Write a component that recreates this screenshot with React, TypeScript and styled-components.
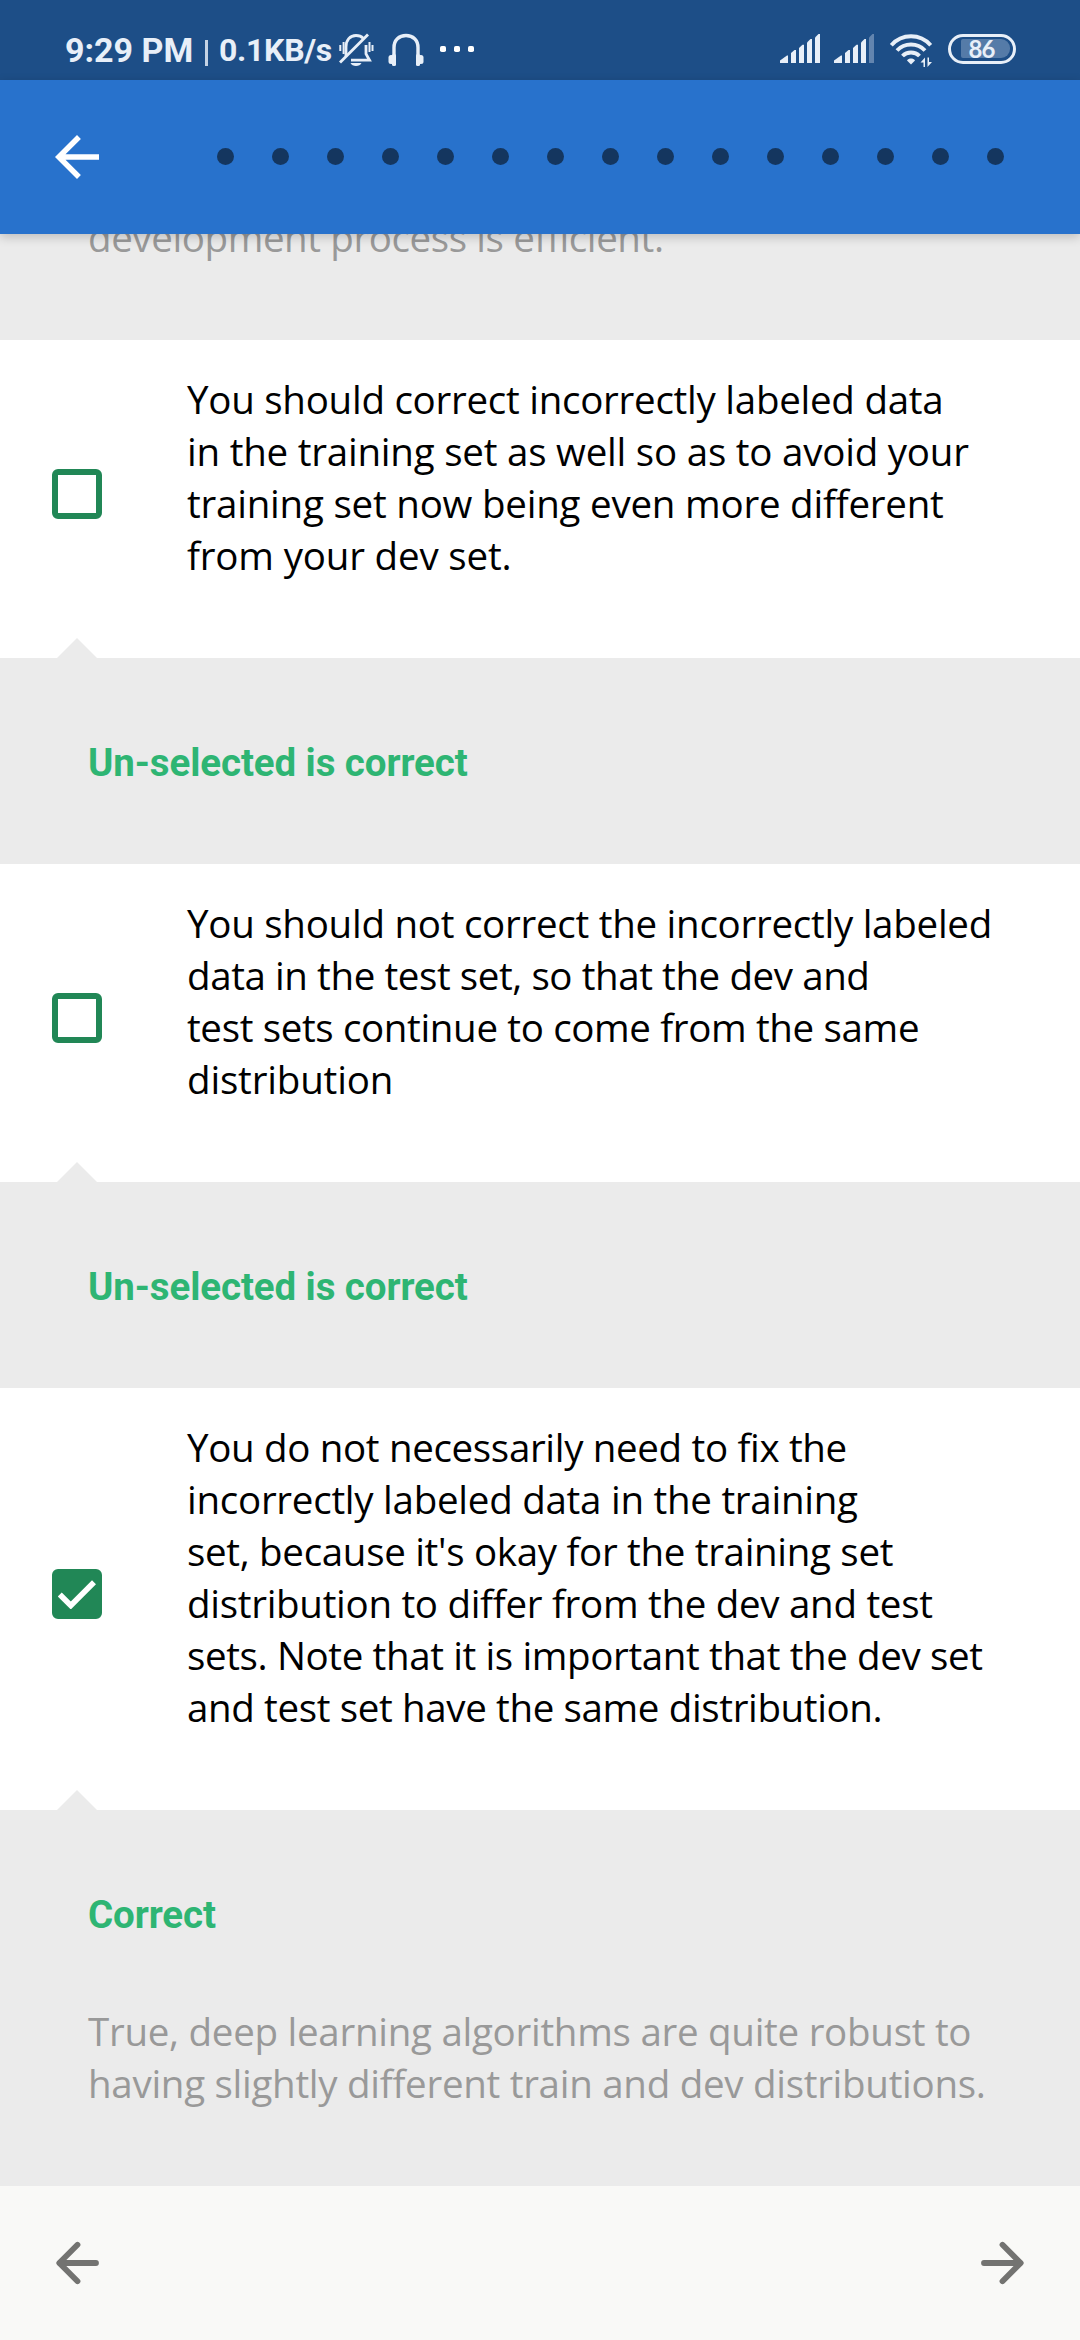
import React from "react";
import styled, { createGlobalStyle } from "styled-components";

const GlobalStyle = createGlobalStyle`
  body { margin: 0; background: #fff; }
  * { box-sizing: border-box; }
`;

const Screen = styled.div`
  width: 1080px;
  height: 2340px;
  display: flex;
  flex-direction: column;
  overflow: hidden;
  background: #fff;
  font-family: "Open Sans", sans-serif;
`;

const StatusBar = styled.header`
  height: 80px;
  flex: none;
  display: flex;
  align-items: flex-start;
  justify-content: space-between;
  padding: 30px 64px 0 65px;
  background: #1d4e87;
  color: #e8eff8;
  font-family: Roboto, sans-serif;
  font-weight: 700;
`;

const StatusGroup = styled.div`
  display: flex;
  height: 40px;
  align-items: flex-start;
`;

const Clock = styled.span`
  width: 134px;
  font-size: 34px;
  line-height: 40px;
  white-space: nowrap;
`;

const Divider = styled.span`
  width: 3px;
  height: 26px;
  margin: 10px 11px 0 6px;
  background: #c5d3e5;
`;

const NetSpeed = styled.span`
  width: 120px;
  font-size: 32px;
  line-height: 41px;
  letter-spacing: -0.3px;
  white-space: nowrap;
`;

const StatusIcon = styled.svg<{ $gap?: number; $top?: number }>`
  display: block;
  flex: none;
  margin-left: ${(p) => p.$gap ?? 0}px;
  margin-top: ${(p) => p.$top ?? 0}px;
`;

const Battery = styled.div`
  width: 68px;
  height: 30px;
  margin: 4px 0 0 15px;
  padding: 2px 3px 2px 9.5px;
  border: 3.5px solid #e8eff8;
  border-radius: 15px;
`;

const BatteryLevel = styled.div`
  display: flex;
  align-items: center;
  justify-content: center;
  width: 49px;
  height: 19px;
  padding-right: 7px;
  border-radius: 2px 9px 9px 2px;
  background: #557ba8;
  font: 700 24px/19px Lato, sans-serif;
  letter-spacing: -1px;
`;

const AppBar = styled.nav`
  z-index: 1;
  height: 154px;
  flex: none;
  display: flex;
  align-items: center;
  justify-content: space-between;
  padding: 0 76px 0 44px;
  background: #2872cc;
  box-shadow: 0 3px 10px rgba(0, 0, 0, 0.2);
`;

const Steps = styled.div`
  display: flex;
  gap: 38px;
  padding-bottom: 1px;
`;

const Step = styled.span`
  width: 17px;
  height: 17px;
  border-radius: 50%;
  background: #14365f;
`;

const Content = styled.main`
  flex: 1;
  display: flex;
  flex-direction: column;
  min-height: 0;
`;

const Option = styled.section`
  flex: none;
  display: flex;
  align-items: center;
  padding: 33px 0 77px 52px;
  background: #fff;
`;

const CheckFrame = styled.span<{ $checked: boolean }>`
  display: flex;
  align-items: center;
  justify-content: center;
  width: 50px;
  height: 50px;
  margin: 34px 85px 0 0;
  border: 6px solid #218756;
  border-radius: 6px;
  background: ${(p) => (p.$checked ? "#218756" : "transparent")};
`;

const BodyText = styled.p<{ $muted?: boolean }>`
  margin: 0;
  font-size: 38.5px;
  line-height: 52px;
  color: ${(p) => (p.$muted ? "#999" : "#000")};
`;

const TextLine = styled.span<{ $tracking: number }>`
  display: block;
  white-space: nowrap;
  letter-spacing: ${(p) => p.$tracking}px;
`;

const Feedback = styled.section`
  flex: none;
  position: relative;
  display: flex;
  flex-direction: column;
  gap: 64px;
  padding: 79px 0 75px 88px;
  background: #ebebeb;

  &::before {
    content: "";
    position: absolute;
    left: 57px;
    top: -20px;
    border: solid transparent;
    border-width: 0 20px 20px;
    border-bottom-color: #ebebeb;
  }

  ${BodyText} {
    margin-bottom: 2px;
  }
`;

const ScrolledFeedback = styled.section`
  flex: none;
  display: flex;
  align-items: flex-end;
  height: 106px;
  padding: 0 0 77px 88px;
  background: #ebebeb;
`;

const Verdict = styled.h2`
  margin: 0;
  font: 700 38.5px/52px Roboto, sans-serif;
  letter-spacing: -0.1px;
  color: #2eb573;
`;

const Footer = styled.footer`
  height: 154px;
  flex: none;
  display: flex;
  align-items: center;
  justify-content: space-between;
  padding: 0 44px;
  background: #f9f9f7;
`;

const MuteBell = () => (
  <StatusIcon width="36" height="34" viewBox="0 0 36 34" $gap={-1} $top={3}>
    <g fill="none" stroke="#e8eff8" strokeWidth="2.8">
      <path d="M8 23.5V14C8 7 12 2.5 18 2.5c3 0 5.500 1 7.200 2.800" />
      <path d="M28 12v9l3.500 6.200H13" />
      <path d="M2 29.500L30 1.500" />
      <path d="M5.600 9v12M2.300 12v6M31.500 9v10M34.500 12v6" strokeWidth="2" />
    </g>
    <path d="M12.500 30h11c-1.500 4-9.500 4-11 0z" fill="#e8eff8" />
  </StatusIcon>
);

const Headphones = () => (
  <StatusIcon width="36" height="34" viewBox="0 0 36 34" $gap={14} $top={3}>
    <path d="M6 25V14.500C6 7 11 2.500 18 2.500S30 7 30 14.500V25" fill="none" stroke="#e8eff8" strokeWidth="3.400" />
    <rect x="0.500" y="22" width="5.500" height="9" rx="2.500" fill="#e8eff8" />
    <rect x="4" y="21" width="4" height="12" rx="1.500" fill="#e8eff8" />
    <rect x="30" y="22" width="5.500" height="9" rx="2.500" fill="#e8eff8" />
    <rect x="28" y="21" width="4" height="12" rx="1.500" fill="#e8eff8" />
  </StatusIcon>
);

const MoreDots = () => (
  <StatusIcon width="36" height="34" viewBox="0 0 36 34" $gap={15} $top={3}>
    {[1, 15, 29].map((x) => (
      <rect key={x} x={x} y="13" width="6" height="6" rx="1.800" fill="#fff" />
    ))}
  </StatusIcon>
);

const Signal = ({ weak, gap }: { weak?: boolean; gap?: number }) => (
  <StatusIcon width="40" height="34" viewBox="0 0 40 34" $gap={gap} fill="#e8eff8">
    <path d="M0 33v-2.500L7 25.500h1V33z" />
    <path d="M11 33V23l3.500-3H16v13z" />
    <path d="M19 33V18l3.500-3.300H24V33z" />
    <path d="M27 33V12.500L30.500 9H32v24z" />
    <path d="M35 33V7.500L38.500 4H40v29z" opacity={weak ? 0.35 : 1} />
  </StatusIcon>
);

const Wifi = () => (
  <StatusIcon width="44" height="38" viewBox="0 0 44 38" $gap={15}>
    <g fill="none" stroke="#e8eff8" strokeWidth="3.900">
      <path d="M2.300 15.200C13 3.300 31 3.300 41.700 15.200" />
      <path d="M8 20.500c7.500-8 20.500-8 28 0" />
      <path d="M13.500 26c4.500-4.700 12.500-4.700 17 0" />
    </g>
    <path d="M18 30.500c1.800-2.600 6.200-2.600 8 0L22 34.500z" fill="#e8eff8" />
    <path d="M36 37V27.500l-4.500 5h3V37zM38.500 27.500V37l4.500-5h-3V27.500z" fill="#e8eff8" />
  </StatusIcon>
);

const BackArrow = () => (
  <svg width="66" height="66" viewBox="0 0 24 24" fill="#fff">
    <path d="M20 11H7.830l5.590-5.590L12 4l-8 8 8 8 1.410-1.410L7.830 13H20v-2z" />
  </svg>
);

const PageArrow = ({ forward }: { forward?: boolean }) => (
  <svg width="66" height="66" viewBox="0 0 66 66">
    <path
      transform={forward ? "rotate(180 33 33)" : undefined}
      d="M52 33H15.500M33.500 14.800L15.300 33L33.500 51.200"
      fill="none"
      stroke="#737371"
      strokeWidth="5.800"
      strokeLinecap="round"
      strokeLinejoin="round"
    />
  </svg>
);

const Checkbox = ({ checked = false }: { checked?: boolean }) => (
  <CheckFrame $checked={checked}>
    {checked && (
      <svg width="38" height="30" viewBox="0 0 38 30">
        <path d="M1.800 15.500L12.800 26.500L36 3.300" fill="none" stroke="#fff" strokeWidth="5.600" />
      </svg>
    )}
  </CheckFrame>
);

type Line = [text: string, tracking: number];

const Lines = ({ lines, muted }: { lines: Line[]; muted?: boolean }) => (
  <BodyText $muted={muted}>
    {lines.map(([text, tracking]) => (
      <TextLine key={text} $tracking={tracking}>
        {text}
      </TextLine>
    ))}
  </BodyText>
);

const previousNote: Line[] = [["development process is efficient.", -0.4]];

const answers: { lines: Line[]; checked: boolean; verdict: string; note: Line[] }[] = [
  {
    lines: [
      ["You should correct incorrectly labeled data", -0.26],
      ["in the training set as well so as to avoid your", -0.22],
      ["training set now being even more different", -0.22],
      ["from your dev set.", -0.17],
    ],
    checked: false,
    verdict: "Un-selected is correct",
    note: [],
  },
  {
    lines: [
      ["You should not correct the incorrectly labeled", -0.26],
      ["data in the test set, so that the dev and", -0.41],
      ["test sets continue to come from the same", -0.35],
      ["distribution", -0.17],
    ],
    checked: false,
    verdict: "Un-selected is correct",
    note: [],
  },
  {
    lines: [
      ["You do not necessarily need to fix the", -0.33],
      ["incorrectly labeled data in the training", -0.26],
      ["set, because it's okay for the training set", -0.31],
      ["distribution to differ from the dev and test", -0.29],
      ["sets. Note that it is important that the dev set", -0.37],
      ["and test set have the same distribution.", -0.36],
    ],
    checked: true,
    verdict: "Correct",
    note: [
      ["True, deep learning algorithms are quite robust to", -0.27],
      ["having slightly different train and dev distributions.", -0.28],
    ],
  },
];

export default function App() {
  return (
    <Screen>
      <GlobalStyle />
      <StatusBar>
        <StatusGroup>
          <Clock>9:29 PM</Clock>
          <Divider />
          <NetSpeed>0.1KB/s</NetSpeed>
          <MuteBell />
          <Headphones />
          <MoreDots />
        </StatusGroup>
        <StatusGroup>
          <Signal />
          <Signal weak gap={14} />
          <Wifi />
          <Battery>
            <BatteryLevel>86</BatteryLevel>
          </Battery>
        </StatusGroup>
      </StatusBar>
      <AppBar>
        <BackArrow />
        <Steps>
          {Array.from({ length: 15 }, (_, i) => (
            <Step key={i} />
          ))}
        </Steps>
      </AppBar>
      <Content>
        <ScrolledFeedback>
          <Lines muted lines={previousNote} />
        </ScrolledFeedback>
        {answers.map((a, i) => (
          <React.Fragment key={i}>
            <Option>
              <Checkbox checked={a.checked} />
              <Lines lines={a.lines} />
            </Option>
            <Feedback>
              <Verdict>{a.verdict}</Verdict>
              {a.note.length > 0 && <Lines muted lines={a.note} />}
            </Feedback>
          </React.Fragment>
        ))}
      </Content>
      <Footer>
        <PageArrow />
        <PageArrow forward />
      </Footer>
    </Screen>
  );
}
